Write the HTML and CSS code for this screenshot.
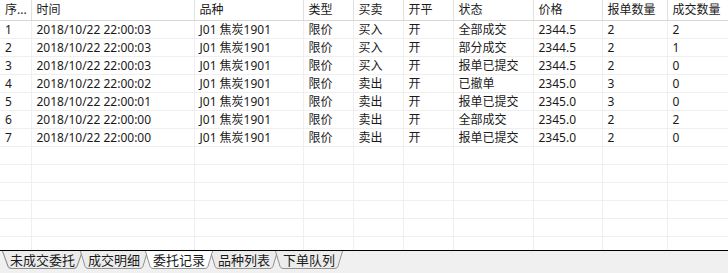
FILE: index.html
```html
<!DOCTYPE html>
<html lang="zh">
<head>
    <meta charset="utf-8">
    <title>委托记录</title>
    <link rel="stylesheet" href="styles.css">
</head>
<body>
    <div class="panel">
        <div class="grid">
            <table class="orders">
                <colgroup>
                    <col style="width:31px">
                    <col style="width:163px">
                    <col style="width:109px">
                    <col style="width:50px">
                    <col style="width:50px">
                    <col style="width:50px">
                    <col style="width:80px">
                    <col style="width:69px">
                    <col style="width:65px">
                    <col>
                </colgroup>
                <thead>
                    <tr>
                        <th>序...</th>
                        <th>时间</th>
                        <th>品种</th>
                        <th>类型</th>
                        <th>买卖</th>
                        <th>开平</th>
                        <th>状态</th>
                        <th>价格</th>
                        <th>报单数量</th>
                        <th>成交数量</th>
                    </tr>
                </thead>
                <tbody>
                    <tr><td>1</td><td>2018/10/22 22:00:03</td><td>J01 焦炭1901</td><td>限价</td><td>买入</td><td>开</td><td>全部成交</td><td>2344.5</td><td>2</td><td>2</td></tr>
                    <tr><td>2</td><td>2018/10/22 22:00:03</td><td>J01 焦炭1901</td><td>限价</td><td>买入</td><td>开</td><td>部分成交</td><td>2344.5</td><td>2</td><td>1</td></tr>
                    <tr><td>3</td><td>2018/10/22 22:00:03</td><td>J01 焦炭1901</td><td>限价</td><td>买入</td><td>开</td><td>报单已提交</td><td>2344.5</td><td>2</td><td>0</td></tr>
                    <tr><td>4</td><td>2018/10/22 22:00:02</td><td>J01 焦炭1901</td><td>限价</td><td>卖出</td><td>开</td><td>已撤单</td><td>2345.0</td><td>3</td><td>0</td></tr>
                    <tr><td>5</td><td>2018/10/22 22:00:01</td><td>J01 焦炭1901</td><td>限价</td><td>卖出</td><td>开</td><td>报单已提交</td><td>2345.0</td><td>3</td><td>0</td></tr>
                    <tr><td>6</td><td>2018/10/22 22:00:00</td><td>J01 焦炭1901</td><td>限价</td><td>卖出</td><td>开</td><td>全部成交</td><td>2345.0</td><td>2</td><td>2</td></tr>
                    <tr><td>7</td><td>2018/10/22 22:00:00</td><td>J01 焦炭1901</td><td>限价</td><td>卖出</td><td>开</td><td>报单已提交</td><td>2345.0</td><td>2</td><td>0</td></tr>
                    <tr><td></td><td></td><td></td><td></td><td></td><td></td><td></td><td></td><td></td><td></td></tr>
                    <tr><td></td><td></td><td></td><td></td><td></td><td></td><td></td><td></td><td></td><td></td></tr>
                    <tr><td></td><td></td><td></td><td></td><td></td><td></td><td></td><td></td><td></td><td></td></tr>
                    <tr><td></td><td></td><td></td><td></td><td></td><td></td><td></td><td></td><td></td><td></td></tr>
                    <tr><td></td><td></td><td></td><td></td><td></td><td></td><td></td><td></td><td></td><td></td></tr>
                    <tr><td></td><td></td><td></td><td></td><td></td><td></td><td></td><td></td><td></td><td></td></tr>
                    <tr><td></td><td></td><td></td><td></td><td></td><td></td><td></td><td></td><td></td><td></td></tr>
                </tbody>
            </table>
        </div>

        <nav class="tabs">
            <div class="tab"><svg viewBox="0 0 80 18" preserveAspectRatio="none"><path d="M0.5,0 L6,15.5 Q7,17.5 9.5,17.5 L70.5,17.5 Q73,17.5 74,15.5 L79.5,0"/></svg><span>未成交委托</span></div>
            <div class="tab"><svg viewBox="0 0 80 18" preserveAspectRatio="none"><path d="M0.5,0 L6,15.5 Q7,17.5 9.5,17.5 L70.5,17.5 Q73,17.5 74,15.5 L79.5,0"/></svg><span>成交明细</span></div>
            <div class="tab active"><svg viewBox="0 0 80 18" preserveAspectRatio="none"><path d="M0.5,0 L6,15.5 Q7,17.5 9.5,17.5 L70.5,17.5 Q73,17.5 74,15.5 L79.5,0"/></svg><span>委托记录</span></div>
            <div class="tab"><svg viewBox="0 0 80 18" preserveAspectRatio="none"><path d="M0.5,0 L6,15.5 Q7,17.5 9.5,17.5 L70.5,17.5 Q73,17.5 74,15.5 L79.5,0"/></svg><span>品种列表</span></div>
            <div class="tab"><svg viewBox="0 0 80 18" preserveAspectRatio="none"><path d="M0.5,0 L6,15.5 Q7,17.5 9.5,17.5 L70.5,17.5 Q73,17.5 74,15.5 L79.5,0"/></svg><span>下单队列</span></div>
        </nav>
    </div>
</body>
</html>
```

FILE: styles.css
```css
body {
    margin: 0;
    background: #f0f0f0;
    font-family: "Noto Sans", "Noto Sans CJK SC", sans-serif;
    font-size: 12px;
    color: #1a1a1a;
}

.panel {
    width: 728px;
    height: 273px;
    display: flex;
    flex-direction: column;
    overflow: hidden;
}

.grid {
    height: 250px;
    flex-shrink: 0;
    background: #fff;
    overflow: hidden;
    border-bottom: 1px solid #000;
}

.orders {
    width: 728px;
    table-layout: fixed;
    border-collapse: collapse;
}

.orders th {
    height: 20px;
    padding: 0 0 0 5px;
    line-height: 16px;
    text-align: left;
    font-weight: normal;
    background: #fff;
    border-right: 1px solid #e0e0e0;
    border-bottom: 1px solid #d8d8d8;
    white-space: nowrap;
    overflow: hidden;
}

.orders td {
    height: 17px;
    padding: 0 0 0 5px;
    line-height: 16px;
    border-right: 1px solid #efefef;
    border-bottom: 1px solid #efefef;
    white-space: nowrap;
    overflow: hidden;
}

.orders th:last-child,
.orders td:last-child {
    border-right: none;
}

.tabs {
    display: flex;
    padding-left: 2px;
}

.tab {
    position: relative;
    height: 18px;
    padding: 0 8px;
    margin-right: -3px;
    display: flex;
    align-items: center;
    font-size: 13px;
}

.tab svg {
    position: absolute;
    left: 0;
    top: 0;
    width: 100%;
    height: 100%;
}

.tab path {
    fill: #ececec;
    stroke: #8a8a8a;
    stroke-width: 1;
}

.tab.active {
    z-index: 1;
}

.tab.active path {
    fill: #fff;
}

.tab span {
    position: relative;
    line-height: 18px;
}
```
